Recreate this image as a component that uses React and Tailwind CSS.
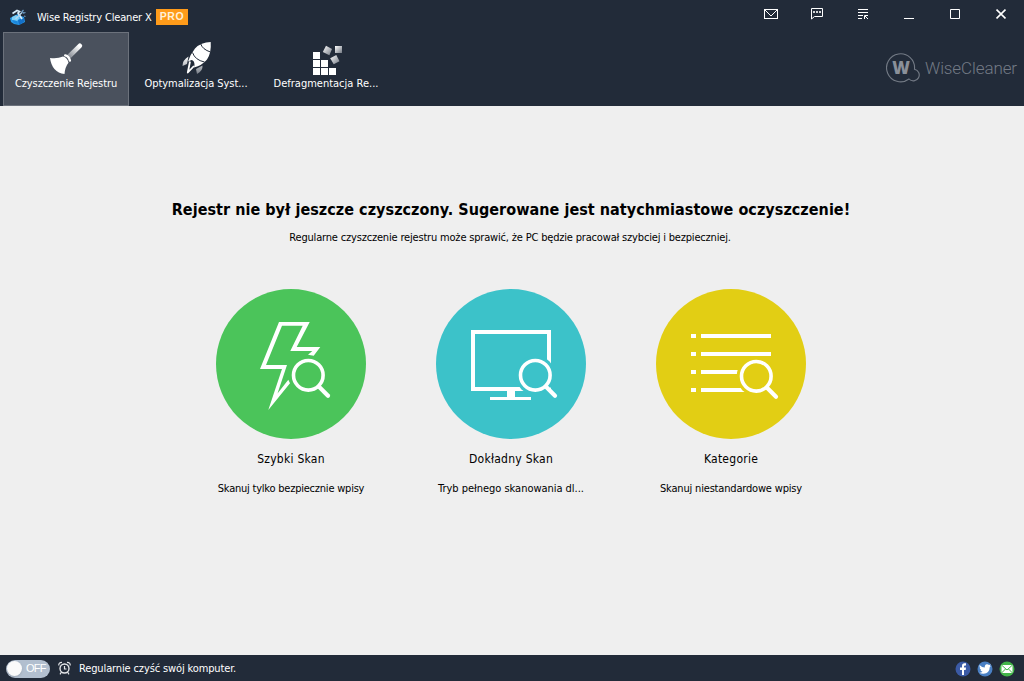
import { useState } from "react";

const tabs = [
  { id: "cleaner", label: "Czyszczenie Rejestru", icon: BroomIcon, text: "tracking-[-0.09px]" },
  { id: "tuneup", label: "Optymalizacja Syst...", icon: RocketIcon, text: "tracking-[-0.06px]" },
  { id: "defrag", label: "Defragmentacja Re...", icon: BlocksIcon, text: "tracking-normal" },
];

const scans = [
  { title: "Szybki Skan", desc: "Skanuj tylko bezpiecznie wpisy", icon: BoltScan, text: "tracking-[-0.22px]" },
  { title: "Dokładny Skan", desc: "Tryb pełnego skanowania dl...", icon: MonitorScan, text: "tracking-[-0.03px]" },
  { title: "Kategorie", desc: "Skanuj niestandardowe wpisy", icon: ListScan, text: "tracking-[-0.18px]" },
];

function AppLogo() {
  return (
    <svg width="18" height="18" viewBox="0 0 18 18">
      <path d="M1 10l4-2 4-2 3 2 3 1 1 5-6 3-5-1-3-2z" fill="#2a9be8" />
      <path d="M3 9l4-2 4 3-3 3-5-1z" fill="#7dd0f8" />
      <path d="M9 12l6-2v4l-5 3z" fill="#1470c8" />
      <path d="M3 12l5 1 1 3-4-1z" fill="#1b86dc" />
      <path d="M3.500 5.500L8 2.500l2.500 1L9 5l4 6" fill="none" stroke="#d9eefb" strokeWidth="1.700" />
      <path d="M13 4.500L6.500 11" stroke="#b7d5ec" strokeWidth="1.400" />
      <path d="M14.500 2l-1.500 1.500 1.500 1.500 2-.5M15 8l1.500.5" fill="none" stroke="#6e9dc5" strokeWidth="1.200" />
    </svg>
  );
}

function BroomIcon() {
  return (
    <svg width="34" height="32" viewBox="0 0 34 32">
      <defs>
        <linearGradient id="handle" gradientUnits="userSpaceOnUse" x1="30" y1="3" x2="20" y2="13">
          <stop offset="0" stopColor="#fff" />
          <stop offset="1" stopColor="#8b9098" />
        </linearGradient>
      </defs>
      <path d="M30.8 2.8L20.5 13" stroke="url(#handle)" strokeWidth="4.600" strokeLinecap="round" />
      <path d="M16.2 12.4q3.8 1 4.7 5.2" fill="none" stroke="#fff" strokeWidth="2.4" strokeLinecap="round" />
      <path d="M1 15q7.500 1 13-1.500 4.500 1.200 5.500 6.200Q16 24 15.500 31 3 29.500 1 15z" fill="#fff" />
    </svg>
  );
}

function RocketIcon() {
  return (
    <svg width="34" height="34" viewBox="0 0 34 34">
      <defs>
        <linearGradient id="fin" x1="0" y1="0" x2="0" y2="1">
          <stop offset="0" stopColor="#fff" />
          <stop offset="1" stopColor="#777d87" />
        </linearGradient>
      </defs>
      <path d="M31.700 1Q22 1 16 7.500 11.500 13 9 20.500l3.500-1.500q3 .5 3 5l-.5 2.500Q23 24.500 28 18.500 32.500 12 31.700 1z" fill="#fff" />
      <path d="M9.500 15.500Q3.500 19 3.500 25l4.500-2zM23.500 24.500q.5 5.500-5.500 8.500l-1-5z" fill="url(#fin)" />
      <path d="M11 20.500L8.800 31.500 15 25" fill="none" stroke="#fff" strokeWidth="1.800" strokeLinejoin="round" />
      <path d="M21.500 2.500Q23.500 8.500 31.500 11M13.500 11.500q2.500 7.500 12 9.500" fill="none" stroke="#222b39" strokeWidth="1" />
    </svg>
  );
}

function BlocksIcon() {
  return (
    <svg className="ml-1" width="30" height="30" viewBox="0 0 30 30">
      <defs>
        <linearGradient id="block" x1="0" y1="0" x2="1" y2="1">
          <stop offset="0" stopColor="#fff" />
          <stop offset="1" stopColor="#747a84" />
        </linearGradient>
      </defs>
      <path d="M0 7h7v7H0zM0 15h7v7H0zM8 15h7v7H8zM0 23h7v7H0zM8 23h7v7H8zM16 23h7v7h-7z" fill="#fff" />
      <path d="M22 1h7v7h-7z" fill="url(#block)" />
      <path d="M13 .8l6 3.200-2.600 6.200-6.600-3.200z" fill="url(#block)" />
      <path d="M23.300 10l3.200 6.200-5.800 3-3.500-6z" fill="url(#block)" />
    </svg>
  );
}

function Magnifier({ cx, cy, bg }) {
  return (
    <g transform={`translate(${cx} ${cy})`}>
      <circle r="19.7" fill={bg} />
      <circle r="14.800" fill="none" stroke="#fff" strokeWidth="3.600" />
      <path d="M10.500 11.300L19.700 20.500" stroke="#fff" strokeWidth="4.200" strokeLinecap="round" />
    </g>
  );
}

function BoltScan() {
  return (
    <svg width="150" height="150" viewBox="0 0 150 150">
      <circle cx="75" cy="75" r="75" fill="#4bc45a" />
      <path d="M63 33H93.700L80.700 58h23.600L97.700 66.700 92 65.700 96.300 62h-22L86.700 36.700H66L50 76h21l-9.500 28.500L72.300 90.700 74 94.300 52.300 121 66 80H44z" fill="#fff" />
      <Magnifier cx={92.3} cy={86.3} bg="none" />
    </svg>
  );
}

function MonitorScan() {
  return (
    <svg width="150" height="150" viewBox="0 0 150 150">
      <circle cx="75" cy="75" r="75" fill="#3cc2c9" />
      <path d="M37 43h76v57H37z" fill="none" stroke="#fff" strokeWidth="4" />
      <Magnifier cx={99.3} cy={86.3} bg="#3cc2c9" />
      <path d="M71 102h8v6h16v3H54v-3h17z" fill="#fff" />
    </svg>
  );
}

function ListScan() {
  return (
    <svg width="150" height="150" viewBox="0 0 150 150">
      <circle cx="75" cy="75" r="75" fill="#e2ce14" />
      <path d="M35 47h5m5 0h70M35 65h5m5 0h70M35 83h5m5 0h70M35 101h5m5 0h45" stroke="#fff" strokeWidth="4" />
      <Magnifier cx={100.3} cy={87.3} bg="#e2ce14" />
    </svg>
  );
}

function WindowButtons() {
  return (
    <div className="flex h-7 items-center text-white">
      <button className="flex w-[46px] justify-center">
        <svg width="14" height="16" viewBox="0 0 14 16" fill="none" stroke="currentColor" shapeRendering="crispEdges">
          <path d="M.5 3.500h13v9H.5z" />
          <path d="M1 4l6 6 6-6" shapeRendering="auto" />
        </svg>
      </button>
      <button className="flex w-[46px] justify-center">
        <svg width="12" height="16" viewBox="0 0 12 16" fill="none" stroke="currentColor">
          <path d="M.5 2.500h11v8H3.500L.5 13z" />
          <path d="M2 6h8" strokeWidth="2" strokeDasharray="2 1" opacity=".8" />
        </svg>
      </button>
      <button className="flex w-[46px] justify-center">
        <svg width="10" height="16" viewBox="0 0 10 16" fill="none" stroke="currentColor">
          <path d="M0 3.500h10M0 6.500h10M0 9.500h5M0 12.500h4M6.500 13V9.500H10M7 10l3 3" />
        </svg>
      </button>
      <button className="flex w-[46px] justify-center">
        <svg width="10" height="16" viewBox="0 0 10 16" stroke="currentColor">
          <path d="M0 12.500h10" />
        </svg>
      </button>
      <button className="flex w-[46px] justify-center">
        <svg width="10" height="16" viewBox="0 0 10 16" fill="none" stroke="currentColor">
          <path d="M.5 3.500h9v9h-9z" />
        </svg>
      </button>
      <button className="flex w-[46px] justify-center">
        <svg width="10" height="16" viewBox="0 0 10 16" fill="none" stroke="currentColor" strokeWidth="1.700">
          <path d="M.5 3.500l9 9M9.500 3.500l-9 9" />
        </svg>
      </button>
    </div>
  );
}

function Brand() {
  return (
    <div className="mr-[7px] flex items-center gap-[4px] text-[#737a85]">
      <svg width="35" height="30" viewBox="0 0 35 30">
        <path d="M28.500 16.200A14 14 0 1 0 23 26a5.900 5.900 0 1 0 5.500-9.800z" fill="none" stroke="currentColor" strokeWidth="1.100" />
        <text x="15" y="21" textAnchor="middle" fontSize="17" fontWeight="800" fontFamily="Open Sans" fill="#8a9099">W</text>
      </svg>
      <span className="text-[17px] leading-6 font-light tracking-[-0.1px] font-['Roboto','Liberation_Sans',sans-serif]">WiseCleaner</span>
    </div>
  );
}

function StatusBar({ on, onToggle }) {
  return (
    <footer className="flex h-[26px] items-center bg-[#222b39] pr-[9px] pl-[6px] text-white">
      <button onClick={onToggle} className="mt-px flex h-[18px] w-11 items-center rounded-full bg-[#b2bfcf] pl-px">
        <span className="size-[15px] rounded-full bg-[#fafafa] shadow-sm" />
        <span className="ml-[4px] text-[11px] leading-none text-white font-['Liberation_Sans',sans-serif] tracking-[-0.8px]">{on ? "ON" : "OFF"}</span>
      </button>
      <svg className="ml-2" width="13" height="14" viewBox="0 0 13 14" fill="none" stroke="#e4e6e9">
        <circle cx="6.500" cy="7.500" r="4.500" strokeWidth="1.400" />
        <path d="M6.500 5v3h2M.8 4.500Q.5 1.500 4 1.300M9 1.300q3.500.2 3.200 3.200M3.500 11L2 13.300M9.500 11l1.500 2.300" strokeWidth="1.200" />
      </svg>
      <span className="mt-[2px] ml-[8px] text-[11px] leading-4 tracking-[-0.13px]">Regularnie czyść swój komputer.</span>
      <div className="mt-[2px] ml-auto flex gap-[6px]">
        <svg width="16" height="16" viewBox="0 0 16 16">
          <circle cx="8" cy="8" r="7.500" fill="#3b5aa5" />
          <path d="M7 14V9H5V6.500h2V5q0-3 3-2.700h1v2.200h-1q-1 0-1 1v1h2L10.700 9H9v5z" fill="#fff" />
        </svg>
        <svg width="16" height="16" viewBox="0 0 16 16">
          <circle cx="8" cy="8" r="7.500" fill="#4a80c4" />
          <path d="M2.500 4Q5 6.500 7.800 6.500 7.500 3.500 10 3.300q1.200 0 2 .7l1.700-.5-.8 1.400 1 0-1.100 1.200Q12.500 12.500 6.500 12.800 4 12.800 2.300 11.700q2.200 0 3.200-1-1.700-.4-2.200-1.900h1Q2.700 8 2.500 6.500l1 .2Q2 5.500 2.500 4z" fill="#fff" />
        </svg>
        <svg width="16" height="16" viewBox="0 0 16 16">
          <circle cx="8" cy="8" r="7.500" fill="#43b549" />
          <path d="M2.500 4h11v8h-11z" fill="#fff" />
          <path d="M2.500 4L8 9l5.500-5M2.500 12l4-4M13.500 12l-4-4" fill="none" stroke="#43b549" />
        </svg>
      </div>
    </footer>
  );
}

export default function App() {
  const [tab, setTab] = useState("cleaner");
  const [schedule, setSchedule] = useState(false);

  return (
    <div className="flex h-screen w-full flex-col overflow-hidden bg-[#efefef] text-black font-['DejaVu_Sans_Condensed','DejaVu_Sans',sans-serif]">
      <header className="h-[106px] bg-[#222b39] text-white">
        <div className="flex h-8 items-start justify-between">
          <div className="flex items-center pt-[8px] pl-[9px]">
            <AppLogo />
            <span className="mt-[2px] ml-[10px] w-[119px] text-[11px] leading-4 whitespace-nowrap tracking-[-0.17px]">Wise Registry Cleaner X</span>
            <span className="flex h-4 w-8 items-center justify-center bg-[#ff9b1a] text-[10.5px] font-bold tracking-[0.5px] text-[#fff1d8] font-['Liberation_Sans',sans-serif]">PRO</span>
          </div>
          <WindowButtons />
        </div>

        <div className="flex h-[74px] items-start justify-between">
          <nav className="flex gap-1 pl-[3px]">
            {tabs.map(({ id, label, icon: Icon, text }) => (
              <button
                key={id}
                onClick={() => setTab(id)}
                className={`flex h-[74px] w-[126px] flex-col items-center border ${tab === id ? "border-[#6c727c] bg-[#4a515d]" : "border-transparent"}`}
              >
                <span className="flex h-[42px] items-end justify-center">
                  <Icon />
                </span>
                <span className={`mt-px text-[11px] leading-4 whitespace-nowrap ${text}`}>{label}</span>
              </button>
            ))}
          </nav>
          <div className="pt-[21px]">
            <Brand />
          </div>
        </div>
      </header>

      <main className="flex flex-1 flex-col items-center pt-[91px]">
        <h1 className="mr-[2px] text-[16px] leading-[26px] font-bold whitespace-nowrap tracking-[0.04px]">
          Rejestr nie był jeszcze czyszczony. Sugerowane jest natychmiastowe oczyszczenie!
        </h1>
        <p className="mt-[7px] mr-[4px] text-[11px] leading-4 whitespace-nowrap tracking-[-0.18px]">
          Regularne czyszczenie rejestru może sprawić, że PC będzie pracował szybciej i bezpieczniej.
        </p>

        <div className="mt-[43px] mr-[2px] flex gap-[70px]">
          {scans.map(({ title, desc, icon: Icon, text }) => (
            <button key={title} className="flex w-[150px] flex-col items-center">
              <Icon />
              <span className="mt-[12px] text-[12px] leading-4 whitespace-nowrap tracking-[0.26px]">{title}</span>
              <span className={`mt-[14px] text-[11px] leading-4 whitespace-nowrap ${text}`}>{desc}</span>
            </button>
          ))}
        </div>
      </main>

      <StatusBar on={schedule} onToggle={() => setSchedule(!schedule)} />
    </div>
  );
}
